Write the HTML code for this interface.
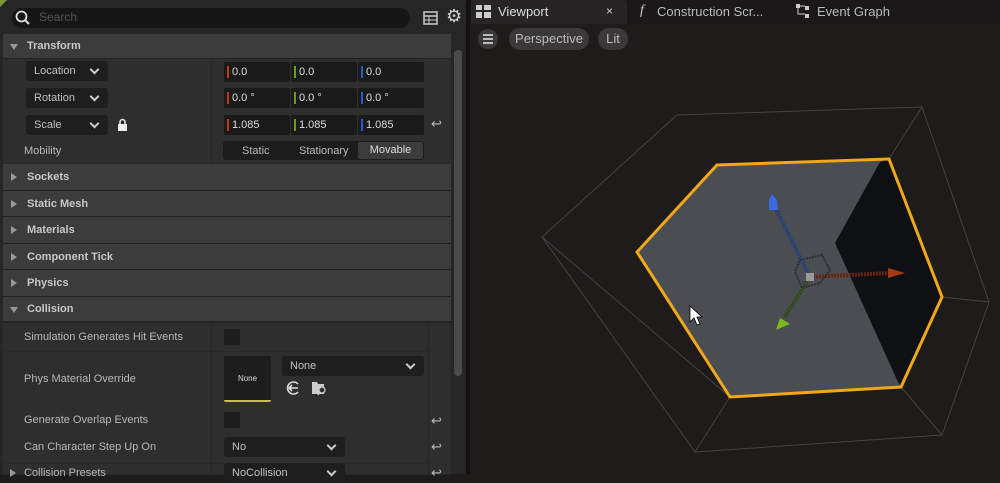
<!DOCTYPE html>
<html><head><meta charset="utf-8"><style>
*{box-sizing:border-box;margin:0;padding:0}
body{width:1000px;height:474px;overflow:hidden;background:#1e1b1b;font-family:"Liberation Sans",sans-serif;font-size:11px;color:#c0c0c0;position:relative}
.a{position:absolute}
#left{left:0;top:0;width:466px;height:474px;background:#262626}
.hdr{position:absolute;left:3px;width:448px;height:25px;background:#3c3c3c;border-bottom:1px solid #222;font-weight:bold;color:#c8c8c8;padding-left:24px;line-height:25px}
.tri{position:absolute;left:8px;top:9px;width:0;height:0;border-top:4px solid transparent;border-bottom:4px solid transparent;border-left:6px solid #999}
.tri.d{left:7px;top:10px;border-left:4px solid transparent;border-right:4px solid transparent;border-top:6px solid #999;border-bottom:0}
.row{position:absolute;left:3px;width:448px;background:#303030;border-bottom:1px solid #282828}
.lbl{position:absolute;left:24px;color:#b8b8b8}
.dd{position:absolute;background:#1e1e1e;border-radius:3px;color:#c0c0c0;padding-left:8px;line-height:20px;height:20px}
.chev{position:absolute;right:10px;top:5px;width:7px;height:7px;border-right:2px solid #ccc;border-bottom:2px solid #ccc;transform:rotate(45deg)}
.num{position:absolute;width:66px;height:20px;background:#1a1a1a;border-radius:2px;padding-left:8px;line-height:20px;color:#ddd}
.num:before{content:"";position:absolute;left:3px;top:4px;width:2px;height:12px}
.r:before{background:#c03a1a}.g:before{background:#6a9a1a}.b:before{background:#2a5ad0}
.undo{position:absolute;color:#bbb;font-size:13px}
.cb{position:absolute;width:16px;height:16px;background:#1d1d1d;border-radius:2px}
</style></head><body>
<div id="left" class="a">
 <div class="a" style="left:0;top:0;width:0;height:0;border-top:7px solid #7a9a3a;border-right:7px solid transparent"></div>
 <div class="a" style="left:12px;top:8px;width:398px;height:20px;background:#161616;border-radius:10px"></div>
 <svg class="a" style="left:15px;top:10px" width="16" height="16"><circle cx="6.5" cy="6.5" r="5" stroke="#ddd" stroke-width="1.8" fill="none"/><line x1="10" y1="10" x2="14" y2="14" stroke="#ddd" stroke-width="2"/></svg>
 <div class="a" style="left:39px;top:10px;color:#555;font-size:12px">Search</div>
 <svg class="a" style="left:423px;top:11px" width="15" height="14"><rect x="1" y="1" width="13" height="12" fill="none" stroke="#ccc" stroke-width="1.5"/><line x1="1" y1="5" x2="14" y2="5" stroke="#ccc" stroke-width="1.5"/><line x1="1" y1="9" x2="14" y2="9" stroke="#ccc"/><line x1="6" y1="5" x2="6" y2="13" stroke="#ccc"/></svg>
 <div class="a" style="left:446px;top:6px;font-size:18px;color:#ccc">⚙</div>
 <div class="a" style="left:454px;top:50px;width:8px;height:326px;background:#4a4a4a;border-radius:4px"></div>
 <div class="hdr" style="top:34px"><span class="tri d"></span>Transform</div>
 <div class="row" style="top:59px;height:105px;background:#2e2e2e"></div>
 <div class="a" style="left:211px;top:59px;width:1px;height:105px;background:#262626"></div>
 <div class="dd" style="left:26px;top:61px;width:82px">Location<span class="chev"></span></div>
 <div class="dd" style="left:26px;top:88px;width:82px">Rotation<span class="chev"></span></div>
 <div class="dd" style="left:26px;top:115px;width:82px">Scale<span class="chev"></span></div>
 <svg class="a" style="left:117px;top:118px" width="11" height="13"><path d="M3 6V4a2.5 2.5 0 0 1 5 0v2" stroke="#eee" stroke-width="1.5" fill="none"/><rect x="1" y="6" width="9" height="7" fill="#eee"/></svg>
 <div class="lbl" style="top:145px">Mobility</div>
 <div class="num r" style="left:224px;top:62px">0.0</div><div class="num g" style="left:291px;top:62px">0.0</div><div class="num b" style="left:358px;top:62px">0.0</div>
 <div class="num r" style="left:224px;top:88px">0.0 °</div><div class="num g" style="left:291px;top:88px">0.0 °</div><div class="num b" style="left:358px;top:88px">0.0 °</div>
 <div class="num r" style="left:224px;top:115px">1.085</div><div class="num g" style="left:291px;top:115px">1.085</div><div class="num b" style="left:358px;top:115px">1.085</div>
 <div class="undo" style="left:431px;top:116px">↩</div>
 <div class="a" style="left:223px;top:141px;width:201px;height:19px;background:#1c1c1c;border-radius:3px"></div>
 <div class="a" style="left:242px;top:145px;color:#bbb">Static</div>
 <div class="a" style="left:299px;top:145px;color:#bbb">Stationary</div>
 <div class="a" style="left:358px;top:142px;width:65px;height:17px;background:#3c3c3c;border-radius:2px;color:#ddd;text-align:center;line-height:17px">Movable</div>
 <div class="hdr" style="top:164px;height:27px;line-height:27px"><span class="tri"></span>Sockets</div>
 <div class="hdr" style="top:191px;height:26px;line-height:26px"><span class="tri"></span>Static Mesh</div>
 <div class="hdr" style="top:217px;height:27px;line-height:27px"><span class="tri"></span>Materials</div>
 <div class="hdr" style="top:244px;height:26px;line-height:26px"><span class="tri"></span>Component Tick</div>
 <div class="hdr" style="top:270px;height:27px;line-height:27px"><span class="tri"></span>Physics</div>
 <div class="hdr" style="top:297px;height:25px;line-height:25px"><span class="tri d"></span>Collision</div>
 <div class="row" style="top:323px;height:152px;background:#2e2e2e"></div>
 <div class="a" style="left:211px;top:323px;width:1px;height:151px;background:#262626"></div>
 <div class="a" style="left:428px;top:323px;width:1px;height:151px;background:#262626"></div>
 <div class="a" style="left:3px;top:351px;width:425px;height:1px;background:#282828"></div>
 <div class="lbl" style="top:331px">Simulation Generates Hit Events</div>
 <div class="cb" style="left:224px;top:329px"></div>
 <div class="lbl" style="top:373px">Phys Material Override</div>
 <div class="a" style="left:224px;top:356px;width:47px;height:46px;background:#1d1d1d;border-radius:2px;border-bottom:2px solid #c8c040;color:#ddd;font-size:8px;text-align:center;line-height:46px">None</div>
 <div class="dd" style="left:282px;top:356px;width:142px;height:20px">None<span class="chev"></span></div>
 <svg class="a" style="left:285px;top:380px" width="16" height="16"><path d="M13 4A6 6 0 1 0 13 12" stroke="#ddd" stroke-width="1.6" fill="none"/><path d="M4 8h9M7 5l-3 3 3 3" stroke="#ddd" stroke-width="1.6" fill="none"/></svg>
 <svg class="a" style="left:311px;top:380px" width="17" height="16"><path d="M1 2h5l1 2h6v10H1z" fill="#ccc"/><circle cx="11" cy="10" r="3" fill="#2e2e2e" stroke="#ccc" stroke-width="1.3"/><line x1="9" y1="12" x2="7" y2="15" stroke="#ccc" stroke-width="1.5"/></svg>
 <div class="lbl" style="top:414px">Generate Overlap Events</div>
 <div class="cb" style="left:224px;top:412px"></div>
 <div class="undo" style="left:431px;top:413px">↩</div>
 <div class="lbl" style="top:441px">Can Character Step Up On</div>
 <div class="dd" style="left:224px;top:437px;width:121px">No<span class="chev"></span></div>
 <div class="undo" style="left:431px;top:439px">↩</div>
 <div class="a" style="left:3px;top:463px;width:425px;height:1px;background:#282828"></div>
 <div class="tri a" style="left:10px;top:469px"></div>
 <div class="lbl" style="top:467px">Collision Presets</div>
 <div class="dd" style="left:224px;top:463px;width:121px">NoCollision<span class="chev"></span></div>
 <div class="undo" style="left:431px;top:465px">↩</div>
</div>
<div class="a" style="left:466px;top:0;width:4px;height:474px;background:#111"></div>
<div class="a" style="left:470px;top:0;width:530px;height:24px;background:#1a1818"></div>
<div class="a" style="left:471px;top:0;width:156px;height:24px;background:#262424;border-radius:3px 3px 0 0"></div>
<svg class="a" style="left:476px;top:5px" width="15" height="13"><rect x="0" y="0" width="6" height="5" fill="#ccc"/><rect x="8" y="0" width="7" height="5" fill="#ccc"/><rect x="0" y="7" width="6" height="6" fill="#ccc"/><rect x="8" y="7" width="7" height="6" fill="#ccc"/></svg>
<div class="a" style="left:498px;top:4px;font-size:13px;color:#ddd">Viewport</div>
<div class="a" style="left:606px;top:4px;font-size:12px;color:#ccc">×</div>
<div class="a" style="left:640px;top:3px;font-size:14px;font-style:italic;color:#ccc;font-family:'Liberation Serif',serif">f</div>
<div class="a" style="left:657px;top:4px;font-size:13px;color:#bbb">Construction Scr...</div>
<svg class="a" style="left:796px;top:4px" width="14" height="14"><rect x="0" y="0" width="4" height="4" fill="#ccc"/><rect x="9" y="2" width="4" height="4" fill="#ccc"/><rect x="9" y="10" width="4" height="4" fill="#ccc"/><path d="M2 4v6h7M4 2h5" stroke="#ccc" fill="none"/></svg>
<div class="a" style="left:817px;top:4px;font-size:13px;color:#bbb">Event Graph</div>
<div class="a" style="left:478px;top:29px;width:20px;height:20px;border-radius:10px;background:#3a3838"></div>
<div class="a" style="left:483px;top:34px;width:10px;height:10px;border-top:2px solid #bbb;border-bottom:2px solid #bbb"></div>
<div class="a" style="left:483px;top:38px;width:10px;height:2px;background:#bbb"></div>
<div class="a" style="left:509px;top:28px;width:80px;height:22px;border-radius:11px;background:#3a3838;color:#bbb;font-size:13px;text-align:center;line-height:22px">Perspective</div>
<div class="a" style="left:598px;top:28px;width:30px;height:22px;border-radius:11px;background:#3a3838;color:#bbb;font-size:13px;text-align:center;line-height:22px">Lit</div>
<svg class="a" style="left:470px;top:0" width="530" height="474" viewBox="470 0 530 474">
 <g stroke="#454343" stroke-width="1" fill="none">
  <path d="M542,237 L677,115 L922,107 L989,302 L942,435 L695,452 Z"/>
  <path d="M542,237 L730,397 M922,107 L889,159 M989,302 L942,297 M942,435 L901,387 M695,452 L730,397"/>
 </g>
 <polygon points="717,165 889,159 942,297 901,387 730,397 637,252" fill="#4a4d52"/>
 <polygon points="880,162 889,159 942,297 901,387 898,382 835,243" fill="#0e1013"/>
 <polygon points="717,165 889,159 942,297 901,387 730,397 637,252" fill="none" stroke="#f0a818" stroke-width="3"/>
 <g stroke-width="4" fill="none" stroke-dasharray="2 1">
  <line x1="810" y1="277" x2="774" y2="205" stroke="#23407a"/>
  <line x1="810" y1="277" x2="890" y2="273" stroke="#6a2412"/>
  <line x1="810" y1="277" x2="784" y2="318" stroke="#2e4a14"/>
  <path d="M800,260 L822,255 L830,270 L820,283 L802,288 L795,272 Z" stroke="#2a3030" stroke-width="2"/>
 </g>
 <polygon points="772,194 777,200 778,210 769,210 769,200" fill="#3a6ae0"/>
 <polygon points="888,268 905,273 888,278" fill="#a03a18"/>
 <polygon points="776,330 780,318 790,324" fill="#7aba20"/>
 <rect x="806" y="273" width="8" height="8" fill="#999"/>
 <path d="M690,306 L690,322 L694,318 L697,325 L700,324 L697,317 L702,317 Z" fill="#fff" stroke="#000" stroke-width="0.8"/>
</svg>
</body></html>
